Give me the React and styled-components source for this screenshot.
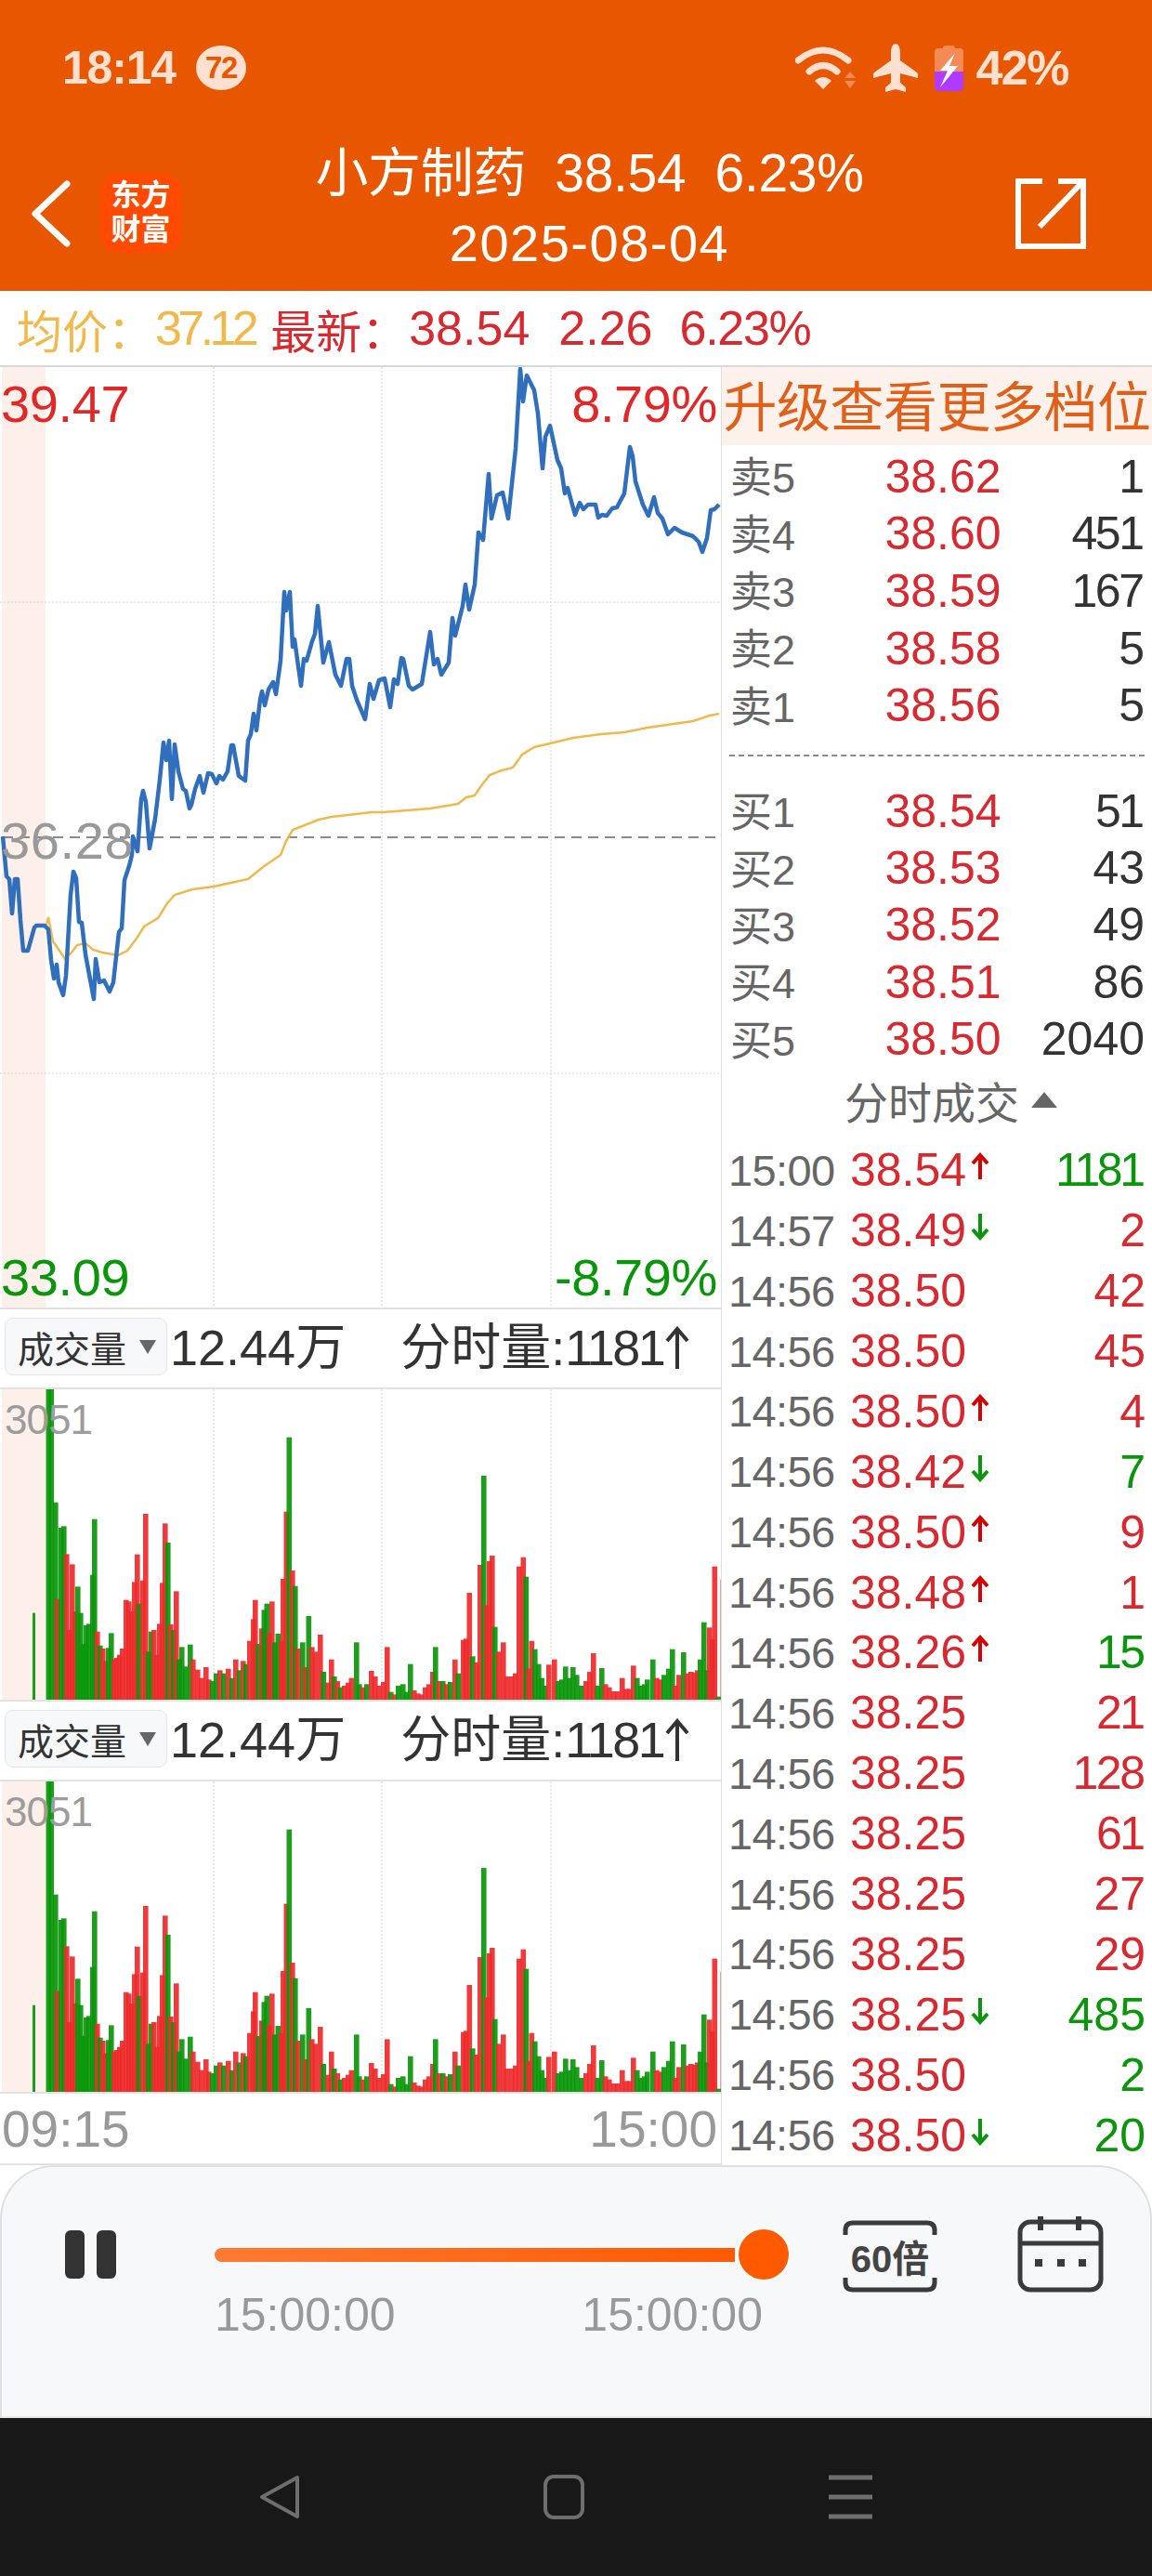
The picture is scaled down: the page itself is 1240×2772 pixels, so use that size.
import React from "react";
import styled, { createGlobalStyle } from "styled-components";

const FONT = `"Liberation Sans", "Noto Sans CJK SC", sans-serif`;
const RED = "#d62a30";
const GREEN = "#0a960a";

const BLUE_LINE =
  "3,900 7,943 10,946 13,983 16,946 19,946 22,990 25,1023 30,1023 37,998 39,996 48,996 52,1000 55,1033 58,1053 61,1038 63,1057 68,1071 71,1050 76,963 79,938 82,945 85,992 88,993 92,1027 101,1075 103,1032 107,1057 112,1055 118,1067 122,1057 128,1003 131,999 134,947 139,932 142,920 143,900 148,916 152,860 154,851 157,863 161,913 167,881 172,839 176,799 179,818 182,797 185,860 188,801 192,830 197,849 200,851 204,870 206,866 210,849 215,835 219,853 224,832 228,833 233,843 236,835 240,839 245,830 249,802 251,802 257,835 264,840 267,797 270,790 273,768 276,786 280,753 282,744 285,759 289,742 294,734 297,747 302,711 306,637 308,657 312,637 315,696 317,688 324,738 327,709 330,711 336,690 339,682 342,652 348,713 354,691 361,726 367,738 373,709 376,709 379,738 384,753 393,774 398,736 402,752 408,732 414,730 420,761 424,731 428,736 432,708 434,709 440,738 444,742 454,736 463,680 467,715 471,709 475,726 483,713 487,665 490,684 498,652 501,629 505,656 511,629 515,573 520,581 526,510 529,558 535,533 541,530 547,558 555,483 560,397 563,432 567,404 575,420 579,445 584,504 587,470 592,458 600,495 604,504 608,531 611,525 619,554 624,541 628,548 633,543 641,543 644,557 648,554 653,555 659,547 664,546 672,531 678,481 681,491 684,518 692,543 698,555 704,535 708,552 713,558 719,575 726,568 734,573 746,577 752,583 756,594 761,579 765,549 769,548 774,543";

const AVG_LINE =
  "50,995 52,987 57,1013 62,1020 70,1032 77,1025 83,1017 92,1015 100,1022 110,1025 127,1028 137,1023 147,1010 155,997 170,988 180,972 188,963 207,957 230,954 267,946 283,933 302,920 308,905 315,893 343,882 357,879 400,874 413,874 463,870 493,865 502,858 511,856 517,847 527,834 540,829 552,826 562,812 575,804 592,800 617,794 647,790 672,788 697,783 746,776 764,770 774,768";

const VOLUME_BARS =
  "74G1005 103G280 109G280 118G648 122R960 130G730 136G725 142R815 148R1060 154R848 160R1000 166G920 172G1005 178G1105 184G1045 190G1040 198G882 202G702 208R1065 214G1110 220R1120 226R1160 232G1118 238G1070 244R1155 250R1150 256R1140 262R1120 270R963 276R968 282R1000 288R905 294R816 298G975 306R900 312R685 318G1130 324G1065 330R1060 336R1140 342R1040 348R908 354R716 360G778 366R1042 372G1060 378R935 384G1155 390G1115 398G1178 408G1107 414R1155 424R1188 432R1215 442R1180 448R1220 456G1225 464G1200 472R1190 480G1200 490R1185 498G1215 506R1155 514G1190 522R1160 528G1170 536R1095 544R1025 548R963 555G1105 562R1055 567G995 573G975 578R1070 584R968 590G1100 597G1072 604R1095 608R895 615R678 621G438 628R868 634G918 640R1120 650G1100 656R1180 663G1015 670R1115 677R1130 688R1075 695G1195 705R1230 712R1155 718G1210 725R1225 732G1245 740R1240 748R1230 755R1215 766G1100 772G1235 780R1245 788G1235 798R1192 806R1210 814R1240 824R1228 832R1115 840G1260 848R1268 856G1240 866G1235 874G1260 882G1170 890R1255 898R1265 906R1268 914R1245 922R1235 930R1195 936G1115 944R1225 952G1225 960R1235 968G1228 978R1155 985G1200 996R1092 1002R1088 1009R940 1016G1145 1024R1165 1032R850 1040G562 1046R980 1052R838 1058R820 1064G1050 1072R1130 1082R1100 1090R1210 1100R1210 1108R1200 1116R855 1125R825 1131G888 1137R1185 1143R1095 1150G1122 1158G1170 1165G1215 1172G1240 1180R1172 1192R1155 1200G1225 1208G1220 1216G1178 1224G1215 1232G1180 1240G1205 1250G1240 1260R1225 1268R1195 1276R1135 1285G1240 1294G1183 1302R1235 1310R1245 1320R1258 1328R1258 1338R1215 1346R1250 1354R1250 1362R1175 1370G1215 1378G1240 1386G1235 1392G1220 1404G1155 1412R1215 1420R1220 1428G1205 1438G1185 1446G1122 1452R1240 1460R1205 1470G1132 1478R1200 1486R1195 1494R1198 1500R1190 1506G1155 1514G1035 1520G1190 1526R1052 1532R1090 1537R855 1545G1275 1555R897";

const SELL_ROWS = [
  ["卖5", "38.62", "1"],
  ["卖4", "38.60", "451"],
  ["卖3", "38.59", "167"],
  ["卖2", "38.58", "5"],
  ["卖1", "38.56", "5"],
];

const BUY_ROWS = [
  ["买1", "38.54", "51"],
  ["买2", "38.53", "43"],
  ["买3", "38.52", "49"],
  ["买4", "38.51", "86"],
  ["买5", "38.50", "2040"],
];

const TRADES = [
  ["15:00", "38.54", "up", "1181", "g"],
  ["14:57", "38.49", "down", "2", "r"],
  ["14:56", "38.50", "", "42", "r"],
  ["14:56", "38.50", "", "45", "r"],
  ["14:56", "38.50", "up", "4", "r"],
  ["14:56", "38.42", "down", "7", "g"],
  ["14:56", "38.50", "up", "9", "r"],
  ["14:56", "38.48", "up", "1", "r"],
  ["14:56", "38.26", "up", "15", "g"],
  ["14:56", "38.25", "", "21", "r"],
  ["14:56", "38.25", "", "128", "r"],
  ["14:56", "38.25", "", "61", "r"],
  ["14:56", "38.25", "", "27", "r"],
  ["14:56", "38.25", "", "29", "r"],
  ["14:56", "38.25", "down", "485", "g"],
  ["14:56", "38.50", "", "2", "g"],
  ["14:56", "38.50", "down", "20", "g"],
];

const GlobalStyle = createGlobalStyle`
  html, body {
    margin: 0;
    padding: 0;
    background: #fff;
  }
  * {
    box-sizing: border-box;
  }
`;

const Page = styled.div`
  width: 1240px;
  height: 2772px;
  display: flex;
  flex-direction: column;
  overflow: hidden;
  font-family: ${FONT};
  background: #fff;
`;

const Header = styled.header`
  height: 313px;
  flex: none;
  background: #e85600;
  color: #fff;
`;

const StatusBar = styled.div`
  height: 146px;
  padding: 0 90px 0 67px;
  display: flex;
  align-items: center;
  justify-content: space-between;
  color: #fde0cf;
`;

const StatusGroup = styled.div`
  display: flex;
  align-items: center;
  gap: ${(p) => p.$gap || 0}px;
`;

const Clock = styled.span`
  font-size: 50px;
  font-weight: 700;
  letter-spacing: -1.2px;
`;

const Badge = styled.span`
  width: 54px;
  height: 48px;
  border-radius: 50%;
  background: #fde0cf;
  color: #e85600;
  font-size: 33px;
  font-weight: 700;
  letter-spacing: -1.5px;
  display: flex;
  align-items: center;
  justify-content: center;
`;

const Battery = styled.span`
  font-size: 52px;
  font-weight: 700;
  letter-spacing: -1.5px;
`;

const NavRow = styled.div`
  height: 167px;
  display: flex;
  align-items: center;
`;

const NavLeft = styled.div`
  width: 222px;
  padding-left: 34px;
  display: flex;
  align-items: center;
  gap: 32px;
`;

const NavRight = styled.div`
  width: 193px;
  padding-left: 46px;
  display: flex;
`;

const Logo = styled.div`
  width: 87px;
  height: 85px;
  border-radius: 20px;
  background: #ff4a00;
  color: #fff;
  font-size: 32px;
  line-height: 37px;
  font-weight: 700;
  text-align: center;
  padding-top: 5px;
`;

const Title = styled.div`
  flex: 1;
  margin-top: -12px;
  text-align: center;
  white-space: pre;
`;

const TitleLine = styled.div`
  font-size: ${(p) => p.$size}px;
  line-height: 75px;
  letter-spacing: ${(p) => p.$ls}px;
`;

const InfoBar = styled.div`
  height: 80px;
  flex: none;
  padding-left: 18px;
  display: flex;
  align-items: center;
  white-space: pre;
`;

const InfoText = styled.span`
  color: ${(p) => (p.$avg ? "#f2b84b" : RED)};
  font-size: ${(p) => (p.$cjk ? 49 : 52)}px;
  margin-left: ${(p) => p.$ml || 0}px;
  letter-spacing: ${(p) => p.$ls || 0}px;
`;

const Board = styled.div`
  flex: none;
  height: 1937px;
  display: flex;
  border-top: 2px solid #d8d8d8;
`;

const LeftColumn = styled.div`
  width: 776px;
  flex: none;
  display: flex;
  flex-direction: column;
`;

const RightColumn = styled.div`
  flex: 1;
  min-width: 0;
  border-left: 1px solid #dedede;
  display: flex;
  flex-direction: column;
`;

const PriceChart = styled.div`
  height: 1014px;
  flex: none;
  position: relative;
  border-bottom: 2px solid #e2e2e2;
`;

const ChartSvg = styled.svg`
  display: block;
  width: 776px;
  height: 100%;
`;

const Scale = styled.div`
  position: absolute;
  left: 1px;
  right: 4px;
  display: flex;
  justify-content: space-between;
  font-size: 56px;
  line-height: 64px;
  letter-spacing: ${(p) => (p.$tone === "n" ? 0.6 : -0.4)}px;
  color: ${(p) => (p.$tone === "g" ? GREEN : p.$tone === "n" ? "#999" : "#e02828")};
  top: ${(p) => p.$top}px;
`;

const VolumePanel = styled.div`
  height: 422px;
  flex: none;
  display: flex;
  flex-direction: column;
  border-bottom: 2px solid #e2e2e2;
`;

const VolumeHead = styled.div`
  height: 86px;
  flex: none;
  padding: 9px 0 0 5px;
  display: flex;
  align-items: flex-start;
  white-space: nowrap;
  color: #333;
  border-bottom: 2px solid #e2e2e2;
`;

const Picker = styled.div`
  width: 175px;
  height: 62px;
  flex: none;
  padding-left: 13px;
  background: #f7f8fa;
  border: 1px solid #e4e5e8;
  border-radius: 9px;
  display: flex;
  align-items: center;
  gap: 14px;
  font-size: 39px;
`;

const PickerCaret = styled.span`
  width: 0;
  height: 0;
  border-left: 9px solid transparent;
  border-right: 9px solid transparent;
  border-top: 15px solid #666;
`;

const VolumeStat = styled.span`
  display: flex;
  align-items: center;
  font-size: 54px;
  line-height: 64px;
  margin-left: ${(p) => p.$ml}px;
`;

const StatCount = styled.span`
  letter-spacing: -2.5px;
  padding-right: 2px;
`;

const StatArrow = styled.svg`
  width: 26px;
  height: 46px;
  fill: none;
  stroke: #333;
  stroke-width: 4;
`;

const VolumeChart = styled.div`
  flex: 1;
  min-height: 0;
  position: relative;
`;

const VolumeMax = styled.span`
  position: absolute;
  left: 5px;
  top: 8px;
  font-size: 44px;
  line-height: 50px;
  letter-spacing: -1px;
  color: #9c9c9c;
`;

const TimeAxis = styled.div`
  flex: 1;
  padding: 0 4px 0 2px;
  display: flex;
  align-items: center;
  justify-content: space-between;
  font-size: 55px;
  color: #999;
  border-bottom: 2px solid #e2e2e2;
`;

const Upgrade = styled.div`
  height: 84px;
  flex: none;
  background: #fdf1eb;
  color: #e0601a;
  font-size: 58px;
  line-height: 88px;
  letter-spacing: -0.5px;
  text-align: center;
  white-space: nowrap;
`;

const Quotes = styled.div`
  padding-top: 3px;
  flex: none;
`;

const QuoteRow = styled.div`
  height: 61.6px;
  padding: 0 8px 0 9px;
  display: grid;
  grid-template-columns: 114px 230px minmax(0, 1fr);
  align-items: center;
  white-space: nowrap;
`;

const QuoteLabel = styled.span`
  font-size: 45px;
  margin-top: -4px;
  color: #666;
`;

const QuotePrice = styled.span`
  font-size: 50px;
  text-align: center;
  color: ${RED};
`;

const Count = styled.span`
  font-size: 50px;
  justify-self: end;
  color: ${(p) => (p.$tone === "g" ? GREEN : p.$tone === "r" ? RED : "#333")};
`;

const Divider = styled.div`
  height: 0;
  margin: ${(p) => p.$m};
  border-top: 2px dashed #8a8a8a;
`;

const TradeHead = styled.div`
  height: 78px;
  flex: none;
  padding: 0 0 8px 30px;
  display: flex;
  align-items: center;
  justify-content: center;
  gap: 13px;
  font-size: 47px;
  color: #666;
`;

const TradeCaret = styled.span`
  width: 0;
  height: 0;
  border-left: 14px solid transparent;
  border-right: 14px solid transparent;
  border-bottom: 17px solid #666;
`;

const TradeRow = styled.div`
  height: 65.1px;
  padding: 0 7px;
  display: grid;
  grid-template-columns: 131px 129px 24px minmax(0, 1fr);
  align-items: center;
  white-space: nowrap;
`;

const TradeTime = styled.span`
  font-size: 47px;
  letter-spacing: -0.6px;
  color: #666;
`;

const TradePrice = styled.span`
  font-size: 50px;
  color: ${RED};
`;

const TickArrow = styled.svg`
  width: 22px;
  height: 30px;
  margin-top: -8px;
  fill: none;
  stroke: ${(p) => (p.$dir === "up" ? "#d50000" : GREEN)};
  stroke-width: 4;
  transform: ${(p) => (p.$dir === "up" ? "none" : "rotate(180deg)")};
`;

const Player = styled.section`
  height: 272px;
  flex: none;
  padding: 53px 0 0 70px;
  display: flex;
  align-items: flex-start;
  background: #f7f8fa;
  border: 2px solid #dfe0e3;
  border-bottom-color: #e8e8ea;
  border-radius: 58px 58px 0 0;
`;

const PauseButton = styled.div`
  width: 55px;
  height: 52px;
  margin: 15px 106px 0 -2px;
  display: flex;
  justify-content: space-between;
  flex: none;
`;

const PauseBar = styled.span`
  width: 21px;
  height: 100%;
  border-radius: 6px;
  background: #333;
`;

const SliderBox = styled.div`
  width: 618px;
  margin-top: 14px;
  flex: none;
`;

const SliderRow = styled.div`
  height: 54px;
  display: flex;
  align-items: center;
  gap: 4px;
`;

const SliderTrack = styled.div`
  flex: 1;
  height: 15px;
  border-radius: 8px 0 0 8px;
  background: linear-gradient(90deg, #ff7a33, #ff5a00);
`;

const SliderThumb = styled.div`
  width: 54px;
  height: 54px;
  flex: none;
  border-radius: 50%;
  background: #ff5a00;
  box-shadow: 0 0 0 2px #fff;
`;

const SliderTimes = styled.div`
  width: 590px;
  margin-top: 13px;
  display: flex;
  justify-content: space-between;
  font-size: 50px;
  line-height: 50px;
  color: #999;
`;

const SpeedButton = styled.div`
  position: relative;
  width: 102px;
  height: 78px;
  margin: 4px 86px 0 58px;
  flex: none;
  display: flex;
  align-items: center;
  justify-content: center;
  font-size: 40px;
  font-weight: 700;
  color: #444;
`;

const SpeedFrame = styled.svg`
  position: absolute;
  inset: 0;
  width: 100%;
  height: 100%;
  fill: none;
  stroke: #3a3a3a;
  stroke-width: 5;
`;

const CalendarIcon = styled.svg`
  width: 93px;
  height: 82px;
  flex: none;
  fill: none;
  stroke: #3a3a3a;
  stroke-width: 5;
`;

const SystemBar = styled.nav`
  flex: 1;
  padding: 61px 301px 0 279px;
  display: flex;
  justify-content: space-between;
  align-items: flex-start;
  background: #181818;
`;

const SystemIcon = styled.svg`
  width: ${(p) => p.$w}px;
  height: 48px;
  fill: none;
  stroke: #6e6e6e;
  stroke-width: 4;
  stroke-linejoin: round;
`;

// the 1 in the reference font is narrower than in Liberation Sans, so
// numbers holding a 1 get pulled together
function tightness(text) {
  const ones = String(text).split("1").length - 1;
  if (ones === 0) return 0;
  return ones > 1 ? 3.5 : 2.5;
}

function SizeCell({ value, tone }) {
  const ls = tightness(value);
  return (
    <Count $tone={tone} style={{ letterSpacing: -ls, paddingRight: ls }}>
      {value}
    </Count>
  );
}

function WifiIcon() {
  return (
    <svg width="66" height="46" viewBox="0 0 66 46" fill="none" stroke="#fde0cf" strokeLinecap="round">
      <path d="M3 15 Q30 -7 57 15" strokeWidth="7" />
      <path d="M15 27 Q30 14 45 27" strokeWidth="7" />
      <path d="M21 37 Q30 29 39 37 L30 46 Z" fill="#fde0cf" stroke="none" />
      <path d="M59 27 L65 34 H53 Z M53 37 H65 L59 45 Z" fill="#f48a55" stroke="none" />
    </svg>
  );
}

function PlaneIcon() {
  return (
    <svg width="48" height="53" viewBox="0 0 48 53" fill="#fde0cf">
      <path d="M24 0 C27 0 29 4 29 10 V18 L47 31 Q48 32 48 34 V37 L29 32 V42 L35 47 V52 L24 49 L13 52 V47 L19 42 V32 L0 37 V34 Q0 32 1 31 L19 18 V10 C19 4 21 0 24 0 Z" />
    </svg>
  );
}

function BatteryIcon() {
  return (
    <svg width="31" height="49" viewBox="0 0 31 49">
      <path d="M9 3 Q9 0 12 0 H19 Q22 0 22 3 H27 Q31 3 31 7 V28 H0 V7 Q0 3 4 3 Z" fill="#f48a55" />
      <path d="M0 28 H31 V44 Q31 49 26 49 H5 Q0 49 0 44 Z" fill="#b03bff" />
      <path d="M22 8 L6 27 H14 L6 45 L25 22 H16 Z" fill="#fff" />
    </svg>
  );
}

function BackIcon() {
  return (
    <svg width="42" height="72" viewBox="0 0 42 72" fill="none" stroke="#fff" strokeWidth="7" strokeLinecap="round" strokeLinejoin="round">
      <path d="M38 4 L4 36 L38 68" />
    </svg>
  );
}

function ExportIcon() {
  return (
    <svg width="76" height="76" viewBox="0 0 76 76" fill="none" stroke="#fff" strokeWidth="6">
      <path d="M29 3 H3 V73 H73 V3 H46" />
      <path d="M72 4 L26 52" />
    </svg>
  );
}

function Arrow({ dir }) {
  return (
    <TickArrow $dir={dir} viewBox="0 0 22 30">
      <path d="M11 29 V3 M3 12 L11 3 L19 12" />
    </TickArrow>
  );
}

function Grid({ height, rows }) {
  return (
    <g stroke="#d4d4d4" strokeWidth="1" strokeDasharray="2 2">
      {[230, 411, 593].map((x) => (
        <line key={x} x1={x} x2={x} y1="0" y2={height} />
      ))}
      {rows.map((y) => (
        <line key={y} x1="0" x2="776" y1={y} y2={y} />
      ))}
    </g>
  );
}

function shiftLine(line) {
  // the points were read off the page, the chart itself starts at y 395
  return line
    .split(" ")
    .map((pt) => {
      const [x, y] = pt.split(",").map(Number);
      return `${x},${y - 395}`;
    })
    .join(" ");
}

function MainChart() {
  return (
    <PriceChart>
      <ChartSvg viewBox="0 0 776 1012">
        <rect x="2" y="0" width="47" height="1012" fill="#fdefe9" />
        <Grid height={1012} rows={[253, 760]} />
        <line x1="3" x2="774" y1="506" y2="506" stroke="#8a8a8a" strokeWidth="2" strokeDasharray="11 7" />
        <polyline points={shiftLine(AVG_LINE)} fill="none" stroke="#f0b94d" strokeWidth="2.5" />
        <polyline points={shiftLine(BLUE_LINE)} fill="none" stroke="#2f6fbb" strokeWidth="4.5" strokeLinejoin="round" />
      </ChartSvg>
      <Scale $top={8}>
        <span>39.47</span>
        <span>8.79%</span>
      </Scale>
      <Scale $top={478} $tone="n">
        <span>36.28</span>
      </Scale>
      <Scale $top={948} $tone="g">
        <span>33.09</span>
        <span>-8.79%</span>
      </Scale>
    </PriceChart>
  );
}

function VolumeBlock() {
  const bars = VOLUME_BARS.split(" ").map((bar) => {
    const [, x, tone, top] = bar.match(/(\d+)([RG])(\d+)/);
    return { x: Number(x) / 2, tone, h: (1285 - Number(top)) / 3 };
  });
  return (
    <VolumePanel>
      <VolumeHead>
        <Picker>
          成交量
          <PickerCaret />
        </Picker>
        <VolumeStat $ml={3}>12.44万</VolumeStat>
        <VolumeStat $ml={59}>
          分时量:
          <StatCount>1181</StatCount>
          <StatArrow viewBox="0 0 26 46">
            <path d="M13 46 V3 M2 16 L13 3 L24 16" />
          </StatArrow>
        </VolumeStat>
      </VolumeHead>
      <VolumeChart>
        <ChartSvg viewBox="0 0 776 334">
          <rect x="2" y="0" width="47" height="334" fill="#fdefe9" />
          <Grid height={334} rows={[]} />
          {bars.map((b, i) => (
            <rect
              key={i}
              x={b.x - 2}
              y={334 - b.h}
              width={b.x < 40 ? 3 : 5.6}
              height={b.h}
              fill={b.tone === "G" ? GREEN : "#ee2a2a"}
              fillOpacity="0.92"
            />
          ))}
        </ChartSvg>
        <VolumeMax>3051</VolumeMax>
      </VolumeChart>
    </VolumePanel>
  );
}

function QuoteList({ rows }) {
  return rows.map(([label, price, size]) => (
    <QuoteRow key={label}>
      <QuoteLabel>{label}</QuoteLabel>
      <QuotePrice>{price}</QuotePrice>
      <SizeCell value={size} />
    </QuoteRow>
  ));
}

export default function App() {
  return (
    <Page>
      <GlobalStyle />
      <Header>
        <StatusBar>
          <StatusGroup $gap={22}>
            <Clock>18:14</Clock>
            <Badge>72</Badge>
          </StatusGroup>
          <StatusGroup $gap={18}>
            <WifiIcon />
            <PlaneIcon />
            <StatusGroup $gap={13}>
              <BatteryIcon />
              <Battery>42%</Battery>
            </StatusGroup>
          </StatusGroup>
        </StatusBar>
        <NavRow>
          <NavLeft>
            <BackIcon />
            <Logo>
              东方
              <br />
              财富
            </Logo>
          </NavLeft>
          <Title>
            <TitleLine $size={57} $ls={-0.3}>小方制药  38.54  6.23%</TitleLine>
            <TitleLine $size={56} $ls={1.5}>2025-08-04</TitleLine>
          </Title>
          <NavRight>
            <ExportIcon />
          </NavRight>
        </NavRow>
      </Header>

      <InfoBar>
        <InfoText $avg $cjk>均价：</InfoText>
        <InfoText $avg $ml={2} $ls={-4.6}>37.12</InfoText>
        <InfoText $cjk $ml={17}>最新：</InfoText>
        <InfoText $ml={2}>38.54</InfoText>
        <InfoText $ml={31}>2.26</InfoText>
        <InfoText $ml={29} $ls={-1.3}>6.23%</InfoText>
      </InfoBar>

      <Board>
        <LeftColumn>
          <MainChart />
          <VolumeBlock />
          <VolumeBlock />
          <TimeAxis>
            <span>09:15</span>
            <span>15:00</span>
          </TimeAxis>
        </LeftColumn>
        <RightColumn>
          <Upgrade>升级查看更多档位</Upgrade>
          <Quotes>
            <QuoteList rows={SELL_ROWS} />
          </Quotes>
          <Divider $m="22px 8px 28px 8px" />
          <QuoteList rows={BUY_ROWS} />
          <TradeHead>
            分时成交
            <TradeCaret />
          </TradeHead>
          {TRADES.map(([time, price, dir, size, tone], i) => (
            <TradeRow key={i}>
              <TradeTime>{time}</TradeTime>
              <TradePrice>{price}</TradePrice>
              {dir ? <Arrow dir={dir} /> : <span />}
              <SizeCell value={size} tone={tone} />
            </TradeRow>
          ))}
        </RightColumn>
      </Board>

      <Player>
        <PauseButton>
          <PauseBar />
          <PauseBar />
        </PauseButton>
        <SliderBox>
          <SliderRow>
            <SliderTrack />
            <SliderThumb />
          </SliderRow>
          <SliderTimes>
            <span>15:00:00</span>
            <span>15:00:00</span>
          </SliderTimes>
        </SliderBox>
        <SpeedButton>
          <SpeedFrame viewBox="0 0 102 78">
            <path d="M3 16 V11 Q3 3 11 3 H91 Q99 3 99 11 V16" />
            <path d="M3 62 V67 Q3 75 11 75 H91 Q99 75 99 67 V62" />
          </SpeedFrame>
          60倍
        </SpeedButton>
        <CalendarIcon viewBox="0 0 93 82">
          <rect x="3" y="6" width="87" height="73" rx="11" />
          <path d="M3 29 H90" />
          <path d="M25 0 V15 M66 0 V15" strokeWidth="6" />
          <path d="M19 46 h8 v8 h-8 z M43 46 h8 v8 h-8 z M66 46 h8 v8 h-8 z" fill="#3a3a3a" stroke="none" />
        </CalendarIcon>
      </Player>

      <SystemBar>
        <SystemIcon $w={43} viewBox="0 0 43 48">
          <path d="M41 3 V45 L3 24 Z" />
        </SystemIcon>
        <SystemIcon $w={44} viewBox="0 0 44 48">
          <rect x="2" y="2" width="40" height="44" rx="9" />
        </SystemIcon>
        <SystemIcon $w={47} viewBox="0 0 47 48">
          <path d="M0 3 H47 M0 24 H47 M0 45 H47" strokeWidth="5" />
        </SystemIcon>
      </SystemBar>
    </Page>
  );
}
